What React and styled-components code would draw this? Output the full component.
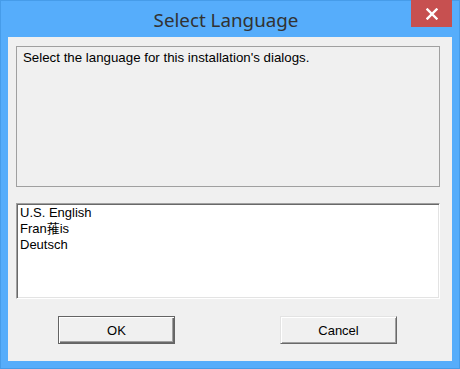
import React from "react";
import styled, { createGlobalStyle } from "styled-components";

const Global = createGlobalStyle`
  html, body { margin: 0; padding: 0; background: #ffffff; }
  * { box-sizing: border-box; }
`;

const Window = styled.div`
  width: 460px;
  height: 369px;
  background: #56adfb;
  box-shadow: inset 0 0 0 1px #469ce9;
  display: flex;
  flex-direction: column;
`;

const TitleBar = styled.div`
  height: 37px;
  display: grid;
  grid-template-columns: 1fr auto 1fr;
  padding-right: 8px;
`;

const Title = styled.div`
  grid-column: 2;
  font-family: "Noto Sans", "Open Sans", sans-serif;
  font-size: 18.8px;
  color: #323232;
  line-height: 37px;
  padding-top: 2px;
`;

const CloseButton = styled.div`
  grid-column: 3;
  justify-self: end;
  align-self: start;
  width: 41px;
  height: 27px;
  background: #c75050;
  display: flex;
  align-items: center;
  justify-content: center;
`;

const Client = styled.div`
  flex: 1;
  margin: 0 8px 8px 8px;
  background: #f0f0f0;
  padding: 9px 12px 0 8px;
  display: flex;
  flex-direction: column;
  font-family: "Liberation Sans", Arial, sans-serif;
  font-size: 13.3px;
  color: #000;
`;

const GroupBox = styled.div`
  height: 141px;
  border: 1px solid #a0a0a0;
  padding: 3px 6px;
  line-height: 15px;
`;

const ListBox = styled.div`
  margin-top: 16px;
  height: 96px;
  background: #ffffff;
  border-style: solid;
  border-width: 1px;
  border-color: #a0a0a0 #ffffff #ffffff #a0a0a0;
  box-shadow: inset 1px 1px 0 #696969, inset -1px -1px 0 #e3e3e3;
  padding: 1px 3px;
  display: flex;
  flex-direction: column;
`;

const ListItem = styled.div`
  font-family: "Liberation Sans", Arial, "Noto Sans CJK SC", sans-serif;
  font-size: 13px;
  line-height: 16px;
  height: 16px;
  white-space: nowrap;
`;

const ButtonRow = styled.div`
  margin-top: 17px;
  display: flex;
  padding-left: 42px;
  gap: 105px;
`;

const Button = styled.div`
  width: 117px;
  height: 28px;
  display: flex;
  align-items: center;
  justify-content: center;
  font-size: 13px;
  background: #f0f0f0;
  border-style: solid;
  border-width: 1px;
  border-color: ${(p) =>
    p.$default ? "#646464" : "#e3e3e3 #696969 #696969 #e3e3e3"};
  box-shadow: ${(p) =>
    p.$default
      ? "inset 1px 1px 0 #ffffff, inset -1px -1px 0 #696969, inset -2px -2px 0 #a0a0a0"
      : "inset 1px 1px 0 #ffffff, inset -1px -1px 0 #a0a0a0"};
`;

export default function App() {
  return (
    <>
      <Global />
      <Window>
        <TitleBar>
          <Title>Select Language</Title>
          <CloseButton>
            <svg width="12" height="12" viewBox="0 0 12 12">
              <path d="M1.5 1.5 L10.5 10.5 M10.5 1.5 L1.5 10.5" stroke="#ffffff" strokeWidth="2.4" strokeLinecap="square" />
            </svg>
          </CloseButton>
        </TitleBar>
        <Client>
          <GroupBox>Select the language for this installation's dialogs.</GroupBox>
          <ListBox>
            <ListItem>U.S. English</ListItem>
            <ListItem>Fran蓷is</ListItem>
            <ListItem>Deutsch</ListItem>
          </ListBox>
          <ButtonRow>
            <Button $default>OK</Button>
            <Button>Cancel</Button>
          </ButtonRow>
        </Client>
      </Window>
    </>
  );
}
